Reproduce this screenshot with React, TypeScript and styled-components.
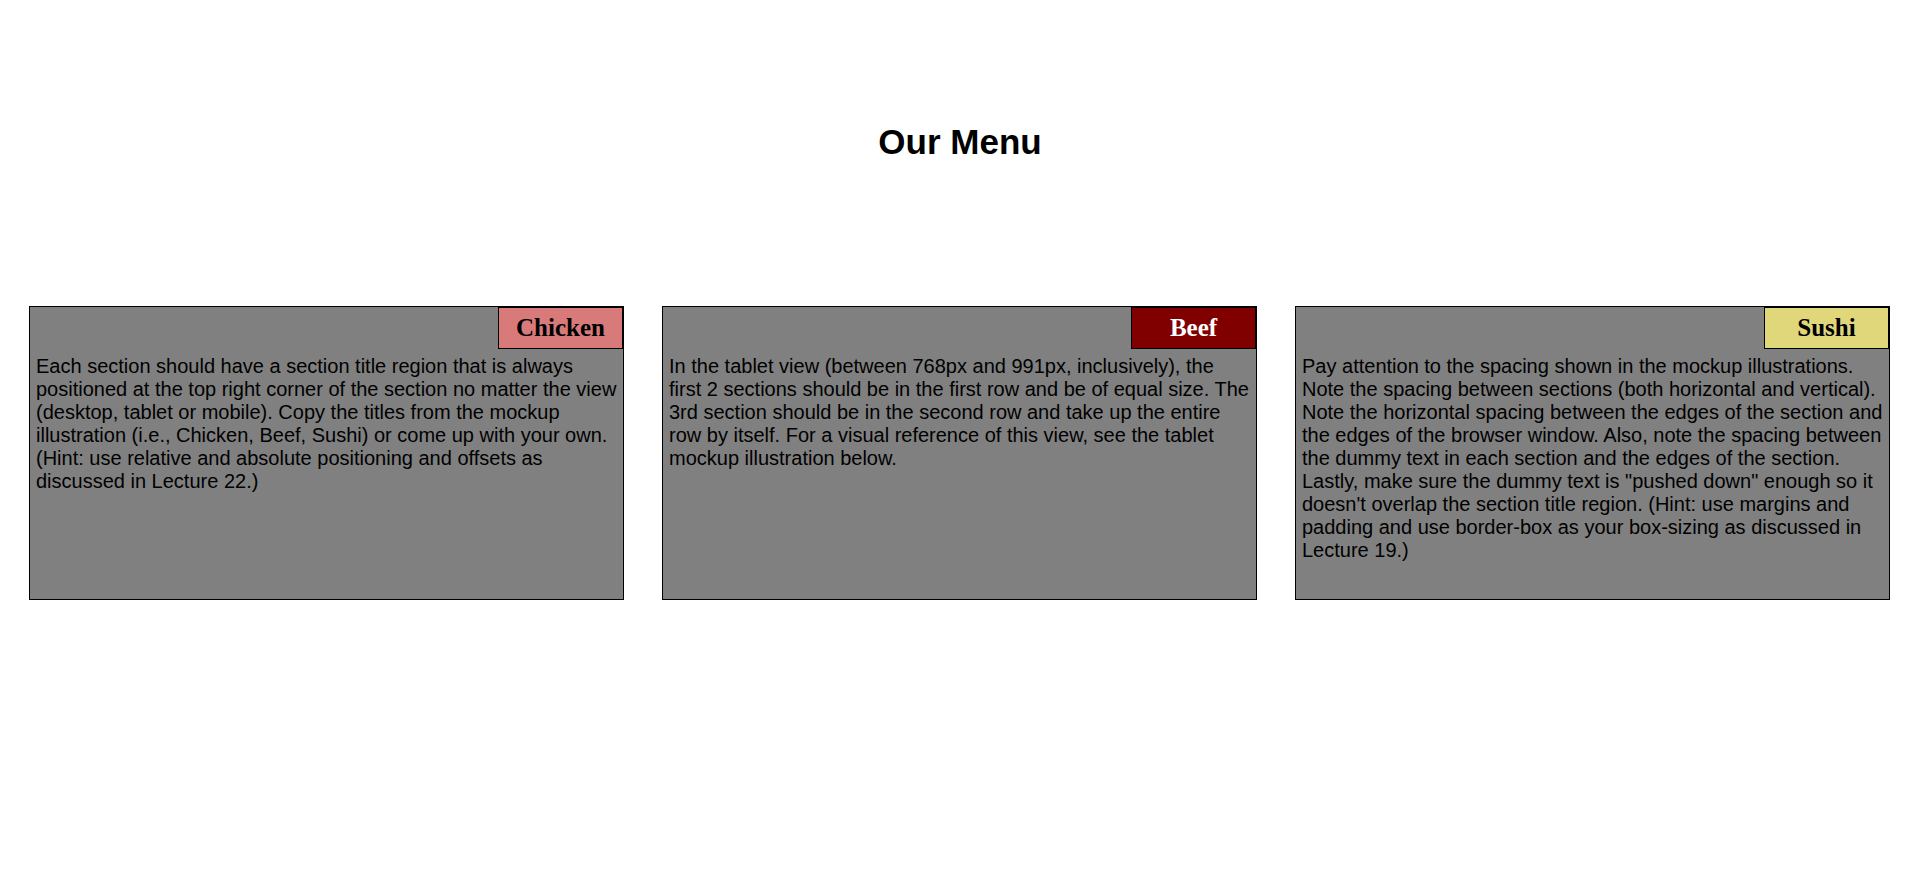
import React from "react";
import styled, { createGlobalStyle } from "styled-components";

const GlobalStyle = createGlobalStyle`
  html, body {
    margin: 0;
    padding: 0;
    background: #ffffff;
  }
  * { box-sizing: border-box; }
`;

const Page = styled.div`
  font-family: "Liberation Sans", Arial, sans-serif;
  padding-top: 122px;
  min-height: 887px;
`;

const Heading = styled.h1`
  margin: 0;
  font-size: 35px;
  line-height: 40px;
  font-weight: bold;
  text-align: center;
  color: #000;
`;

const Grid = styled.div`
  display: grid;
  grid-template-columns: repeat(3, 1fr);
  column-gap: 38px;
  padding: 0 30px 0 29px;
  margin-top: 144px;
`;

const Section = styled.section`
  position: relative;
  height: 294px;
  background: #808080;
  border: 1px solid #000;
  padding: 48px 6px 0 6px;
`;

const Title = styled.div<{ $bg: string; $fg: string }>`
  position: absolute;
  top: 0;
  right: 0;
  width: 125px;
  height: 42px;
  border: 1px solid #000;
  background: ${(p) => p.$bg};
  color: ${(p) => p.$fg};
  font-family: "Liberation Serif", "Times New Roman", serif;
  font-weight: bold;
  font-size: 25px;
  line-height: 39px;
  text-align: center;
`;

const Text = styled.p`
  margin: 0;
  font-size: 20px;
  line-height: 23px;
  color: #000;
`;

const sections = [
  {
    title: "Chicken",
    bg: "#d87a7a",
    fg: "#000",
    text: "Each section should have a section title region that is always positioned at the top right corner of the section no matter the view (desktop, tablet or mobile). Copy the titles from the mockup illustration (i.e., Chicken, Beef, Sushi) or come up with your own. (Hint: use relative and absolute positioning and offsets as discussed in Lecture 22.)",
  },
  {
    title: "Beef",
    bg: "#800000",
    fg: "#fff",
    text: "In the tablet view (between 768px and 991px, inclusively), the first 2 sections should be in the first row and be of equal size. The 3rd section should be in the second row and take up the entire row by itself. For a visual reference of this view, see the tablet mockup illustration below.",
  },
  {
    title: "Sushi",
    bg: "#e0d67a",
    fg: "#000",
    text: 'Pay attention to the spacing shown in the mockup illustrations. Note the spacing between sections (both horizontal and vertical). Note the horizontal spacing between the edges of the section and the edges of the browser window. Also, note the spacing between the dummy text in each section and the edges of the section. Lastly, make sure the dummy text is "pushed down" enough so it doesn\'t overlap the section title region. (Hint: use margins and padding and use border-box as your box-sizing as discussed in Lecture 19.)',
  },
];

export default function App() {
  return (
    <>
      <GlobalStyle />
      <Page>
        <Heading>Our Menu</Heading>
        <Grid>
          {sections.map((s) => (
            <Section key={s.title}>
              <Title $bg={s.bg} $fg={s.fg}>
                {s.title}
              </Title>
              <Text>{s.text}</Text>
            </Section>
          ))}
        </Grid>
      </Page>
    </>
  );
}
